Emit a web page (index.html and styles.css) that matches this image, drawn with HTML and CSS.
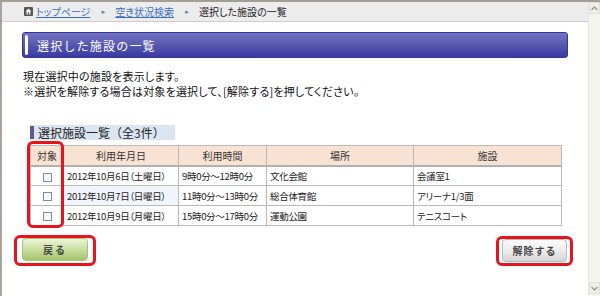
FILE: index.html
```html
<!DOCTYPE html>
<html lang="ja">
<head>
<meta charset="utf-8">
<link rel="stylesheet" href="styles.css">
</head>
<body>
<div class="frame">
  <div class="main">
    <div class="crumbs">
      <svg class="home" width="9" height="9" viewBox="0 0 9 9"><rect x="0" y="0" width="9" height="9" rx="1" fill="#555"/><path d="M4.5 1.6 L1.6 4.4 H2.6 V7.4 H6.4 V4.4 H7.4 Z" fill="#fff"/><rect x="3.8" y="5.2" width="1.4" height="2.2" fill="#555"/></svg>
      <a class="crumb-link" href="#">トップページ</a>
      <span class="arrow">&#9658;</span>
      <a class="crumb-link" href="#">空き状況検索</a>
      <span class="arrow">&#9658;</span>
      <span class="crumb-current">選択した施設の一覧</span>
    </div>
    <div class="title-bar"><span class="title-mark"></span><h1 class="title">選択した施設の一覧</h1></div>
    <p class="note">現在選択中の施設を表示します。<br>※選択を解除する場合は対象を選択して、[解除する]を押してください。</p>
    <h2 class="sub"><span class="sub-mark"></span>選択施設一覧（全3件）</h2>
    <div class="table-wrap">
      <table class="list">
        <thead>
          <tr><th class="c1">対象</th><th class="c2">利用年月日</th><th class="c3">利用時間</th><th class="c4">場所</th><th class="c5">施設</th></tr>
        </thead>
        <tbody>
          <tr><td class="chk"><span class="box"></span></td><td>2012年10月6日（土曜日）</td><td>9時0分～12時0分</td><td>文化会館</td><td>会議室1</td></tr>
          <tr><td class="chk"><span class="box"></span></td><td class="hl">2012年10月7日（日曜日）</td><td>11時0分～13時0分</td><td>総合体育館</td><td>アリーナ1/3面</td></tr>
          <tr><td class="chk"><span class="box"></span></td><td>2012年10月9日（月曜日）</td><td>15時0分～17時0分</td><td>運動公園</td><td>テニスコート</td></tr>
        </tbody>
      </table>
      <div class="mark-col"></div>
    </div>
    <div class="actions">
      <div class="ring ring-back"><button class="btn btn-back">戻る</button></div>
      <div class="ring ring-release"><button class="btn btn-release">解除する</button></div>
    </div>
  </div>
  <div class="scroll">
    <div class="sbtn"><svg width="9" height="7" viewBox="0 0 9 7"><path d="M1.5 5 L4.5 2 L7.5 5" fill="none" stroke="#9a9a90" stroke-width="1.3"/></svg></div>
    <div class="sbtn"><svg width="9" height="7" viewBox="0 0 9 7"><path d="M1.5 2 L4.5 5 L7.5 2" fill="none" stroke="#9a9a90" stroke-width="1.3"/></svg></div>
  </div>
</div>
</body>
</html>
```
FILE: styles.css
```css
* { box-sizing: border-box; }
html, body { margin: 0; padding: 0; }
body {
  width: 600px;
  height: 296px;
  overflow: hidden;
  background: #fff;
  font-family: "Noto Sans CJK JP", "Liberation Sans", sans-serif;
  color: #222;
}
.frame {
  display: flex;
  height: 296px;
  border-top: 2px solid #a29e94;
  border-left: 2px solid #a8a49b;
}
.main {
  flex: 1;
  background: #fff;
  position: relative;
}
.crumbs {
  height: 20px;
  background: #ececec;
  border-bottom: 1px solid #cdcdcd;
  display: flex;
  align-items: center;
  padding-left: 22px;
  font-size: 10px;
  font-feature-settings: "palt";
}
.home { margin-right: 3px; }
.crumb-link { color: #3a6fc0; text-decoration: underline; }
.arrow { color: #6c7aa8; font-size: 6px; margin: 0 9px 0 10px; }
.crumb-current { color: #222; }
.title-bar {
  margin: 10px 0 0 20px;
  width: 546px;
  height: 26px;
  border: 1px solid #34349a;
  border-radius: 3px;
  background: linear-gradient(#7272c2, #5a5ab2 45%, #3a3aa0);
  display: flex;
  align-items: center;
}
.title-mark {
  width: 3px;
  height: 20px;
  background: #fff;
  border-radius: 2px;
  margin-left: 2px;
}
.title {
  margin: 0 0 0 9px;
  font-size: 12px;
  font-weight: normal;
  color: #fff;
  letter-spacing: 1.2px;
}
.note {
  margin: 11px 0 0 21px;
  font-size: 11px;
  line-height: 15px;
  color: #111;
  font-feature-settings: "palt";
  letter-spacing: 0.2px;
}
.sub {
  margin: 26px 0 0 28px;
  width: 145px;
  height: 15px;
  background: #dae5f1;
  display: flex;
  align-items: center;
  font-size: 12px;
  font-weight: normal;
  color: #222;
  letter-spacing: 0;
}
.sub-mark {
  width: 4px;
  height: 13px;
  background: #5c5c92;
  margin-right: 4px;
}
.table-wrap {
  position: relative;
  margin: 5px 0 0 28px;
  width: 531px;
}
.list {
  width: 531px;
  border-collapse: collapse;
  font-size: 10px;
  font-feature-settings: "palt";
  table-layout: fixed;
  border: 1px solid #a9a9a9;
}
.list th, .list td {
  border: 1px solid #b9b9b9;
  height: 20px;
  padding: 0 3px;
  white-space: nowrap;
}
.list th {
  background: #f8e2d4;
  font-weight: normal;
  color: #333;
  text-align: center;
  border-bottom: 2px solid #b0b0b0;
}
.c1 { width: 33px; }
.c2 { width: 115px; }
.c3 { width: 88px; }
.c4 { width: 147px; }
.c5 { width: 148px; }
.list td { color: #222; background: #fff; font-size: 9.5px; letter-spacing: -0.3px; }
.list td.hl { background: #f1f5fb; }
.chk { text-align: center; }
.box {
  display: inline-block;
  width: 9px;
  height: 9px;
  border: 1px solid #7c8aa8;
  background: #f7f9fc;
  vertical-align: middle;
}
.mark-col {
  position: absolute;
  left: -3px;
  top: -4px;
  width: 37px;
  height: 87px;
  border: 3px solid #e8141c;
  border-radius: 6px;
}
.actions {
  display: flex;
  justify-content: space-between;
  margin: 9px 0 0 12px;
  width: 559px;
}
.ring {
  border: 3px solid #e8141c;
  border-radius: 6px;
  padding: 0 5px 1px 5px;
}
.btn {
  display: block;
  height: 23px;
  border-radius: 4px;
  font-family: "Noto Sans CJK JP", sans-serif;
  font-size: 10px;
  font-weight: bold;
  color: #444;
  letter-spacing: 2px;
  padding: 0;
}
.btn-back {
  width: 66px;
  border: 1px solid #a8c07a;
  background: linear-gradient(#eef6dc, #c8dea0 50%, #a4c46c);
}
.ring-release { margin-top: 1px; padding: 0 3px 1px 3px; }
.btn-release {
  width: 65px;
  border: 1px solid #b8b8b8;
  background: linear-gradient(#fbfbfb, #ececec 50%, #d6d6d6);
  letter-spacing: 1px;
}
.scroll {
  width: 12px;
  background: #f4f4ef;
  border-left: 1px solid #e6e6e0;
  display: flex;
  flex-direction: column;
  justify-content: space-between;
  padding-bottom: 2px;
}
.sbtn {
  height: 12px;
  background: #f0f0ea;
  border: 1px solid #e0e0d8;
  display: flex;
  align-items: center;
  justify-content: center;
}
```
